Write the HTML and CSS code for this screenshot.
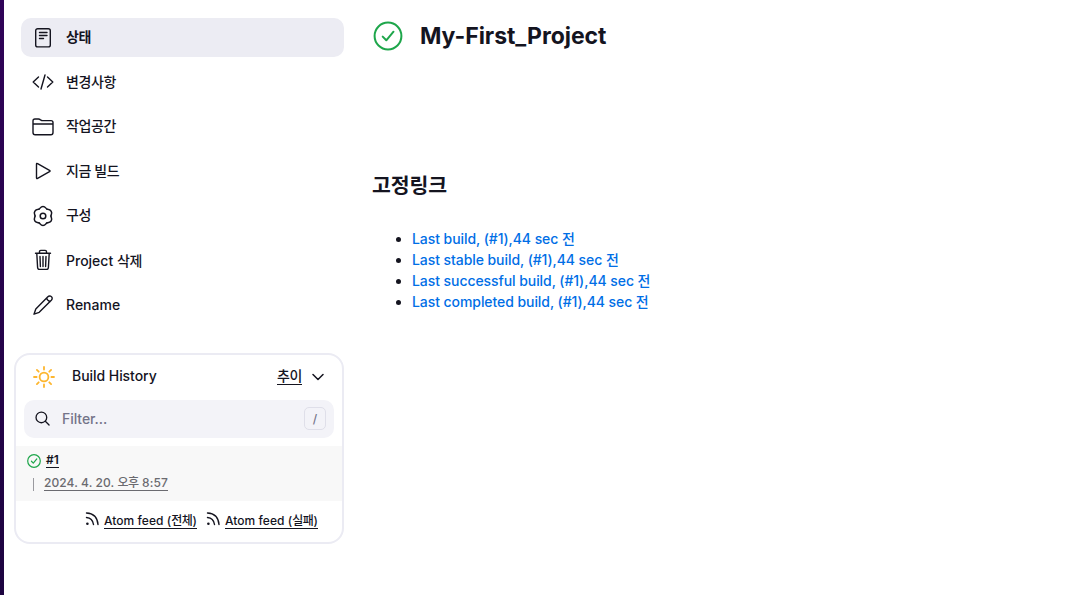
FILE: index.html
```
<!DOCTYPE html>
<html lang="ko">
<head>
    <meta charset="UTF-8">
    <meta name="viewport" content="width=device-width, initial-scale=1.0">
    <title>My-First_Project</title>
    <link rel="stylesheet" href="styles.css">
</head>
<body>
    <div class="page">
        <div class="side-panel">
            <div class="tasks">
                <a class="task active">
                    <svg class="icon" viewBox="0 0 22 22"><rect x="3.700" y="1.700" width="14.600" height="18.200" rx="2"/><path d="M7.500 5.500h7.500M7.500 8.500h7.500M7.500 11.500h4"/></svg>
                    <span class="ko">상태</span>
                </a>
                <a class="task">
                    <svg class="icon" viewBox="0 0 22 22"><path d="M6.500 6L1.200 11l5.300 5M15.500 6l5.300 5-5.300 5M13 4L9 18"/></svg>
                    <span class="ko">변경사항</span>
                </a>
                <a class="task">
                    <svg class="icon" viewBox="0 0 22 22"><path d="M1 8V5q0-2 2-2h3.500q1 0 1.700.6l.8.600q.6.400 1.500.400H19q2 0 2 2V8M1 8h20v8.500q0 2.200-2.200 2.200H3.200Q1 18.700 1 16.500z"/></svg>
                    <span class="ko">작업공간</span>
                </a>
                <a class="task">
                    <svg class="icon" viewBox="0 0 22 22"><path d="M4.500 4.200v13.600q0 1.200 1.100.6l11.900-6.700q1.100-.7 0-1.400L5.600 3.600q-1.100-.6-1.100.6z"/></svg>
                    <span class="ko">지금 빌드</span>
                </a>
                <a class="task">
                    <svg class="icon gear" viewBox="0 0 22 22">
                        <circle cx="11" cy="11" r="2.800"/>
                        <path id="tooth" d="M7 4.100C8.700 3.100 8.400 1.500 11 1.500S13.300 3.100 15 4.100"/>
                        <use href="#tooth" transform="rotate(60 11 11)"/>
                        <use href="#tooth" transform="rotate(120 11 11)"/>
                        <use href="#tooth" transform="rotate(180 11 11)"/>
                        <use href="#tooth" transform="rotate(240 11 11)"/>
                        <use href="#tooth" transform="rotate(300 11 11)"/>
                    </svg>
                    <span class="ko">구성</span>
                </a>
                <a class="task">
                    <svg class="icon" viewBox="0 0 22 22"><path d="M3.500 4.300h15M7.500 4.300V2.700q0-1.300 1.300-1.300h4.400q1.300 0 1.300 1.300v1.600M4.800 4.500l.8 14q.1 1.900 2 1.900h6.800q1.900 0 2-1.900l.8-14M8 7.500l.4 10M11 7.500v10M14 7.500l-.4 10"/></svg>
                    <span class="task-delete">Project <span class="ko">삭제</span></span>
                </a>
                <a class="task">
                    <svg class="icon" viewBox="0 0 22 22"><path d="M15.600 3.100q1.400-1.400 3-.9 1.300.6 1.600 1.800.1 1.200-.9 2.300L7.200 18.300 2 20.200l1.800-5.300zM14.700 4q.4 2.700 3.400 3.500"/></svg>
                    <span>Rename</span>
                </a>
            </div>

            <div class="history">
                <div class="history-header">
                    <svg class="sun" viewBox="0 0 22 22"><circle cx="11" cy="11" r="4.400"/><path d="M11 1v2.600M11 18.400V21M1 11h2.600M18.400 11H21M3.900 3.900l1.800 1.800M16.300 16.300l1.800 1.800M3.900 18.100l1.800-1.800M16.300 5.700l1.800-1.800"/></svg>
                    <span class="history-title">Build History</span>
                    <a class="trend ko">추이</a>
                    <svg class="chevron" viewBox="0 0 12 8"><path d="M1 1.500l5 5 5-5"/></svg>
                </div>
                <div class="filter">
                    <svg class="search" viewBox="0 0 16 16"><circle cx="6.800" cy="6.800" r="5.700"/><path d="M11 11l4 4"/></svg>
                    <span class="filter-text">Filter...</span>
                    <span class="key">/</span>
                </div>
                <div class="build">
                    <div class="build-name">
                        <svg class="ok-small" viewBox="0 0 30 30"><circle cx="15" cy="15" r="13.500"/><path d="M9.500 15.500l4 4 7.500-9"/></svg>
                        <a class="build-number">#1</a>
                    </div>
                    <div class="build-date">
                        <a>2024. 4. 20. <span class="ko">오후</span> 8:57</a>
                    </div>
                </div>
                <div class="feeds">
                    <svg class="rss" viewBox="0 0 14 14"><circle cx="2.400" cy="11.800" r="1.300"/><path d="M1.500 1q10.500.5 11.500 11.500M1.500 5.500q6 .5 7 7"/></svg>
                    <a>Atom feed (<span class="ko">전체</span>)</a>
                    <svg class="rss second" viewBox="0 0 14 14"><circle cx="2.400" cy="11.800" r="1.300"/><path d="M1.500 1q10.500.5 11.500 11.500M1.500 5.500q6 .5 7 7"/></svg>
                    <a>Atom feed (<span class="ko">실패</span>)</a>
                </div>
            </div>
        </div>

        <div class="main-panel">
            <div class="headline">
                <svg class="ok" viewBox="0 0 30 30"><circle cx="15" cy="15" r="13.400"/><path d="M9.700 15.600l3.600 3.700 7.200-8.600"/></svg>
                <h1>My-First_Project</h1>
            </div>
            <h2>고정링크</h2>
            <ul class="permalinks">
                <li><a>Last build, (#1),44 sec <span class="ko">전</span></a></li>
                <li><a>Last stable build, (#1),44 sec <span class="ko">전</span></a></li>
                <li><a>Last successful build, (#1),44 sec <span class="ko">전</span></a></li>
                <li><a>Last completed build, (#1),44 sec <span class="ko">전</span></a></li>
            </ul>
        </div>
    </div>
</body>
</html>
```
FILE: styles.css
```
*{
    box-sizing: border-box;
}
body{
    margin: 0;
    background: #fff;
    color: #14141f;
    font-family: Inter, "Noto Sans CJK KR", sans-serif;
    font-size: 14px;
    font-weight: 500;
}
svg{
    flex: none;
    fill: none;
    stroke: currentColor;
    stroke-width: 1.4;
    stroke-linecap: round;
    stroke-linejoin: round;
}
.ko{
    letter-spacing: -0.4px;
}
.page{
    display: flex;
    height: 595px;
    border-left: 4px solid #28044f;
    border-image: linear-gradient(#300358, #1d0440) 1;
    border-width: 0 0 0 4px;
}
/* SIDE PANEL */
.side-panel{
    width: 340px;
    padding: 18px 0 0 10px;
}
.tasks{
    display: flex;
    flex-direction: column;
    gap: 5.6px;
    margin-left: 7px;
}
.task{
    display: flex;
    align-items: center;
    height: 39px;
    padding-left: 11px;
    gap: 12px;
    border-radius: 10px;
    line-height: 20px;
}
.task > .ko{
    margin-top: -1px;
}
.task.active{
    background: #ececf3;
    font-weight: 600;
}
.task-delete{
    padding-top: 1px;
}
.icon{
    width: 22px;
    height: 22px;
}
.gear{
    stroke-width: 1.5;
}
/* BUILD HISTORY */
.history{
    height: 191px;
    margin-top: 28.4px;
    border: 2px solid #ebebf3;
    border-radius: 16px;
}
.history-header{
    display: flex;
    align-items: center;
    height: 43px;
    margin-bottom: 2px;
    padding: 0 17px 0 17px;
}
.sun{
    width: 22px;
    height: 22px;
    margin-top: 2px;
    color: #fdb62f;
    stroke-width: 1.8;
}
.history-title{
    flex: 1;
    margin: -1px 0 0 17px;
    letter-spacing: -0.05px;
}
.trend{
    border-bottom: 1px solid #14141f;
    line-height: 16px;
}
.chevron{
    width: 12px;
    height: 8px;
    margin: 2px 1px 0 10px;
    stroke-width: 1.5;
}
.filter{
    display: flex;
    align-items: center;
    height: 38px;
    margin: 0 8px;
    padding: 0 8px 0 11px;
    border-radius: 10px;
    background: #f3f3f8;
    color: #737389;
}
.search{
    width: 15px;
    height: 15px;
    margin-top: -1px;
    color: #14141f;
    stroke-width: 1.4;
}
.filter-text{
    flex: 1;
    margin-left: 12px;
    letter-spacing: -0.05px;
}
.key{
    width: 22px;
    height: 23px;
    border: 1px solid #dfdfe9;
    border-radius: 5px;
    font-size: 12px;
    line-height: 22px;
    text-align: center;
}
.build{
    height: 55px;
    margin-top: 8px;
    padding: 6px 0 0 11px;
    background: #f8f8f8;
    font-size: 12px;
}
.build-name{
    display: flex;
    align-items: center;
    height: 18px;
    gap: 5px;
}
.ok-small{
    width: 14px;
    height: 14px;
    color: #1ea64b;
    stroke-width: 2.6;
}
.build-number{
    border-bottom: 1px solid #14141f;
    font-weight: 600;
    line-height: 14px;
}
.build-date{
    display: flex;
    align-items: center;
    height: 13px;
    margin: 8px 0 0 6px;
    padding-left: 10px;
    border-left: 1px solid #9a9a9f;
    color: #6b6b70;
}
.build-date a{
    margin-top: -2px;
    border-bottom: 1px solid #6b6b70;
    letter-spacing: 0.09px;
    line-height: 14px;
}
.feeds{
    display: flex;
    align-items: center;
    justify-content: flex-end;
    height: 39px;
    padding-right: 24px;
    font-size: 12px;
}
.feeds a{
    margin-top: 2px;
    border-bottom: 1px solid #14141f;
    letter-spacing: 0.05px;
    line-height: 14px;
}
.rss{
    width: 14px;
    height: 14px;
    margin: -2px 5px 0 0;
}
.rss circle{
    fill: currentColor;
    stroke: none;
}
.rss.second{
    margin-left: 9px;
}
/* MAIN PANEL */
.main-panel{
    flex: 1;
    padding: 20px 0 0 28px;
}
.headline{
    display: flex;
    align-items: center;
    height: 32px;
    gap: 17px;
    padding-left: 1px;
}
.ok{
    width: 30px;
    height: 30px;
    color: #1ea64b;
    stroke-width: 2;
}
h1{
    margin: 0;
    font-size: 23px;
    font-weight: 700;
    letter-spacing: -0.05px;
}
h2{
    margin: 119px 0 0;
    font-size: 20.5px;
    font-weight: 700;
    letter-spacing: -0.1px;
    line-height: 30px;
}
.permalinks{
    margin: 27px 0 0;
    padding-left: 40px;
    line-height: 21px;
}
.permalinks li{
    height: 21px;
}
.permalinks a{
    color: #006ee6;
    letter-spacing: -0.07px;
}
```
